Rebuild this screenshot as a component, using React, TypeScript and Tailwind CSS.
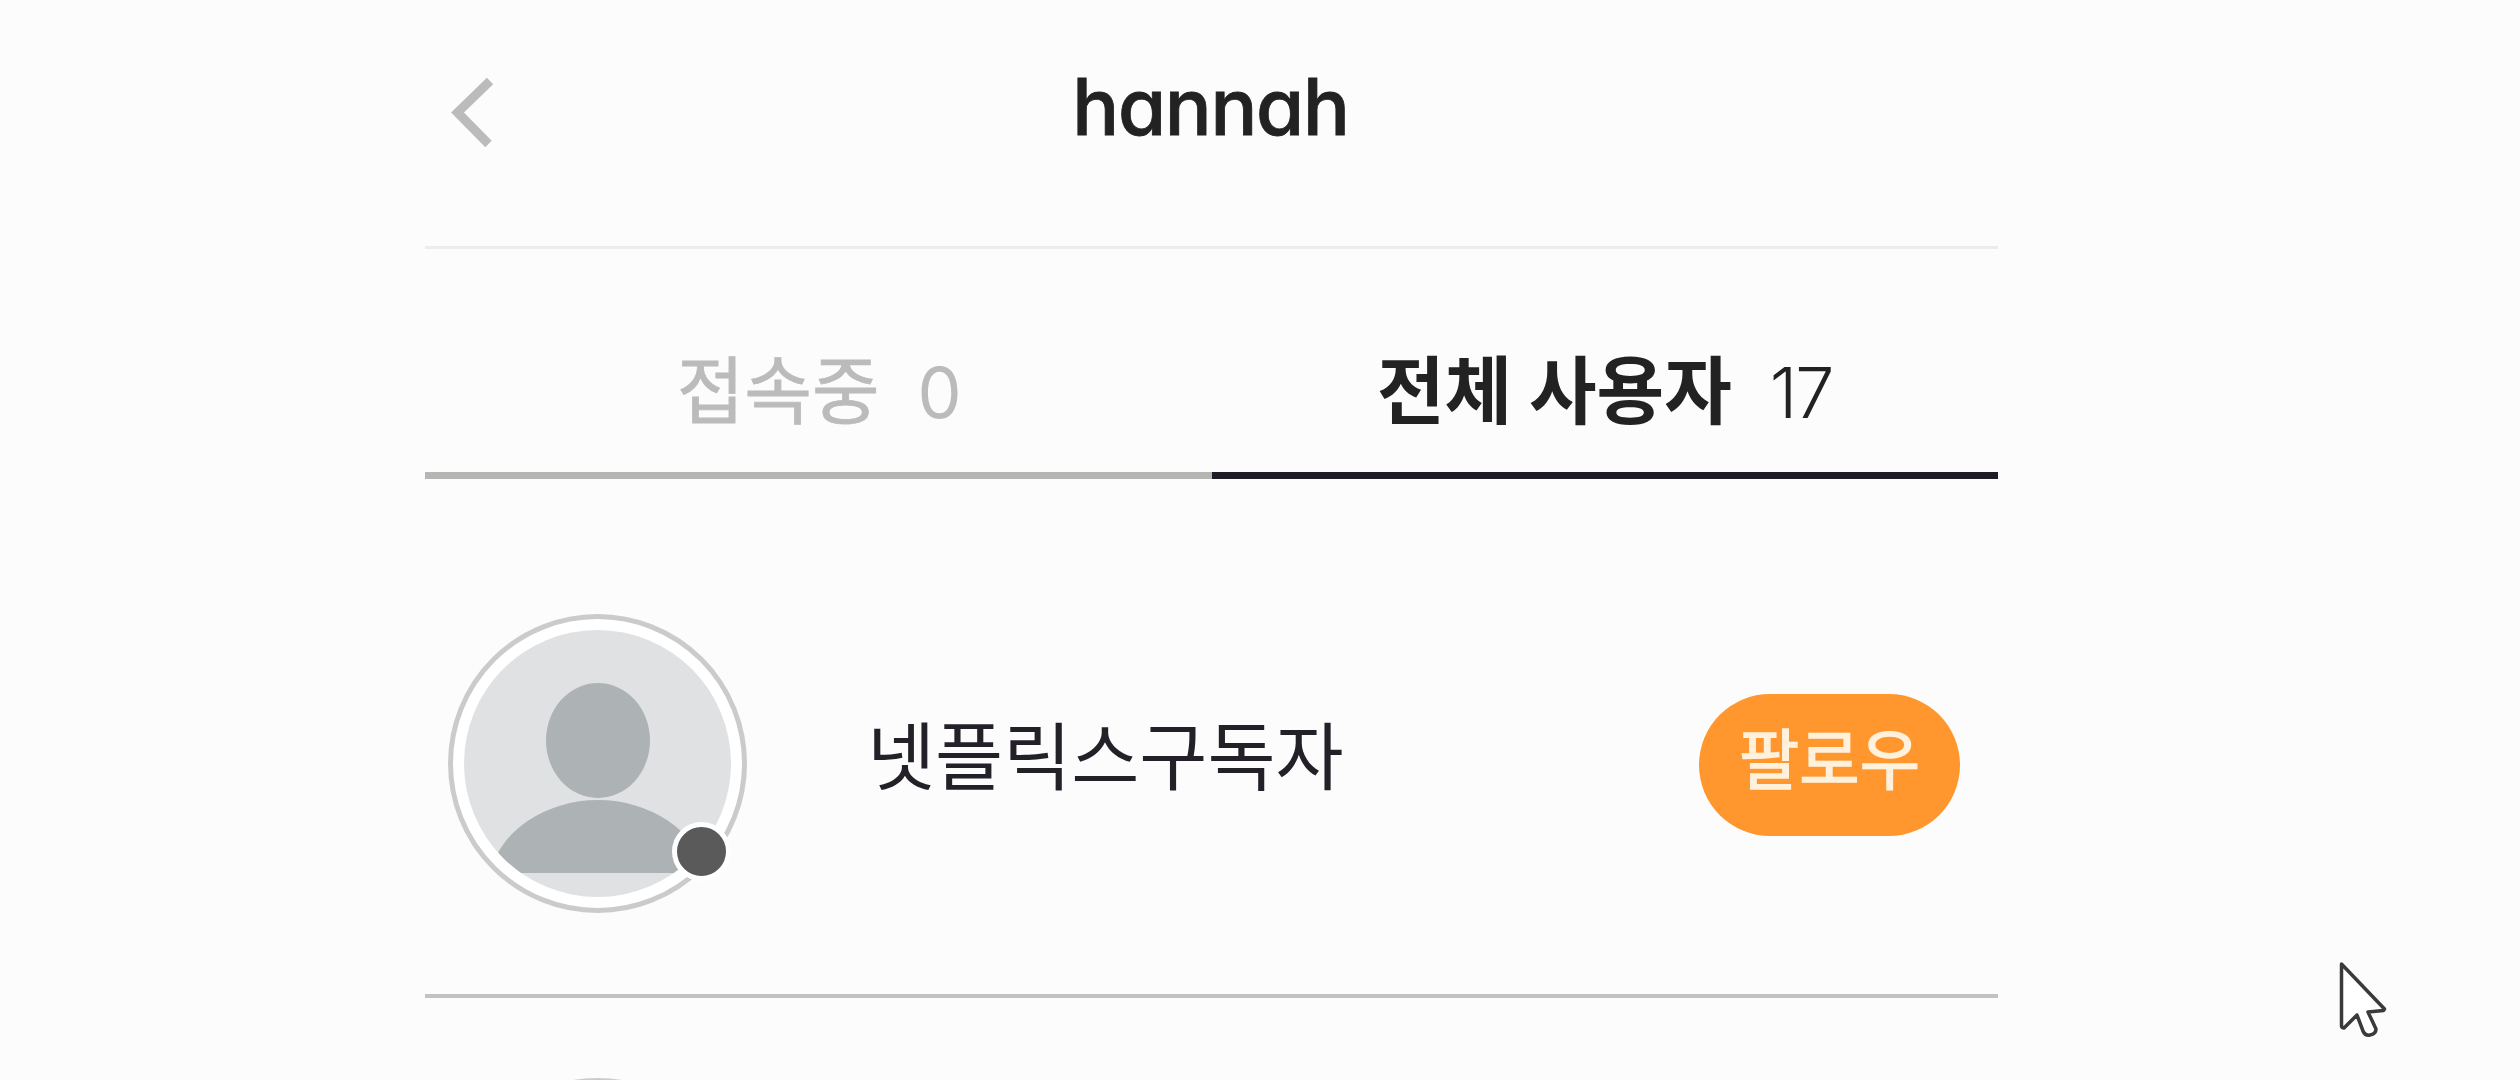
import { useState } from "react";

const tabs = [
	{ id: "online", label: "접속중", count: 0 },
	{ id: "all", label: "전체 사용자", count: 17 },
];

const users = [
	{ id: 1, name: "넷플릭스구독자" },
	{ id: 2, name: "" },
];

function BackIcon() {
	return (
		<svg width="48" height="80" viewBox="0 0 48 80" fill="none" stroke="#bbbbbb" strokeWidth="9">
			<path d="M41 8L8.5 39.5L39.5 71" />
		</svg>
	);
}

function Avatar() {
	return (
		<div className="relative -mt-0.5 size-[299px] shrink-0">
			<svg width="299" height="299" viewBox="0 0 299 299">
				<defs>
					<clipPath id="avatar-clip">
						<circle cx="149.5" cy="149.5" r="133.5" />
					</clipPath>
				</defs>
				<circle cx="149.5" cy="149.5" r="147" fill="#ffffff" stroke="#cbcbcb" strokeWidth="5" />
				<g clipPath="url(#avatar-clip)">
					<rect width="299" height="299" fill="#dfe1e2" />
					<ellipse cx="150" cy="126.5" rx="52" ry="57.5" fill="#adb2b5" />
					<path d="M42 259A110 90 0 0 1 258 259Z" fill="#adb2b5" />
				</g>
			</svg>
			<span className="absolute left-[224px] top-[208px] size-[59px] rounded-full border-5 border-white bg-[#5a5a5a]" />
		</div>
	);
}

function UserItem({ name }: { name: string }) {
	return (
		<li className="flex h-[464px] shrink-0 items-center border-b-4 border-[#c2c2c2] pl-[23px] pr-[38px]">
			<Avatar />
			{name && (
				<>
					<span className="ml-[120px] grow pb-6 text-[74px] leading-none text-[#232028]">{name}</span>
					<button className="mt-0.5 h-[142px] w-[261px] rounded-full bg-[#ff962e] pb-[18px] text-[65.5px] leading-none text-[#fff1dc] [-webkit-text-stroke:1.5px_#fff1dc]">
						팔로우
					</button>
				</>
			)}
		</li>
	);
}

export default function App() {
	const [active, setActive] = useState("all");

	return (
		<div className="h-[1080px] overflow-hidden bg-[#fcfcfc] font-['Noto_Sans_CJK_KR',sans-serif]">
			<div className="ml-[425px] w-[1573px]">
				<header className="grid h-[249px] grid-cols-[1fr_auto_1fr] border-b-3 border-[#ececec]">
					<button className="ml-6 mt-[73px] h-20 w-12">
						<BackIcon />
					</button>
					<h1 className="mt-[67px] pr-0.5 font-['Inter',sans-serif] text-[78px] font-medium leading-[79px] tracking-[-1.3px] text-[#222222] [-webkit-text-stroke:0.8px_#222222] [font-feature-settings:'cv11']">
						hannah
					</h1>
				</header>

				<nav className="flex h-[230px]">
					{tabs.map((tab) => (
						<button
							key={tab.id}
							onClick={() => setActive(tab.id)}
							className={`flex flex-1 items-baseline justify-center border-b-7 pt-[101px] leading-none ${
								active === tab.id ? "border-[#1f1b26] text-[#222222]" : "border-[#b5b5b3] text-[#bbbbbb]"
							}`}
						>
							<span className={`text-[73.5px] ${active === tab.id ? "font-bold" : "[-webkit-text-stroke:0.8px_#bbbbbb]"}`}>
								{tab.label}
							</span>
							<span
								className={`ml-[38px] font-['Inter',sans-serif] text-[70px] tracking-[-2px] ${
									active === tab.id ? "font-light" : "font-normal"
								}`}
							>
								{tab.count}
							</span>
						</button>
					))}
				</nav>

				<ul className="flex flex-col pt-[55px]">
					{users.map((user) => (
						<UserItem key={user.id} name={user.name} />
					))}
				</ul>
			</div>

			<svg className="absolute left-[2330px] top-[955px]" width="70" height="90" viewBox="0 0 70 90">
				<path
					d="M11.5 9L54.5 54L53.5 55.5L38 57L46 74Q46 79 40 80Q35 81 33 76L27 60L14 73Q12 73 11.5 71Z"
					fill="#ffffff"
					stroke="#3a3a3a"
					strokeWidth="3.5"
					strokeLinejoin="round"
				/>
			</svg>
		</div>
	);
}
